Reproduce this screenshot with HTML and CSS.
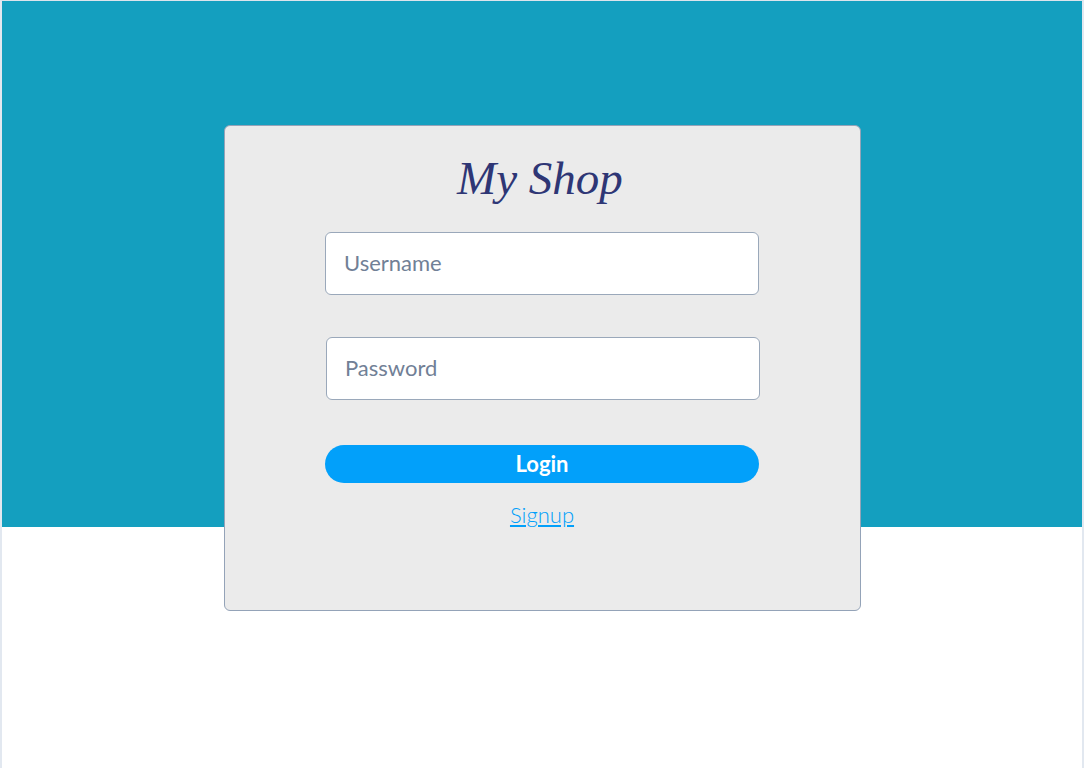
FILE: index.html
```html
<!DOCTYPE html>
<html>
<head>
<meta charset="utf-8">
<link rel="stylesheet" href="styles.css">
</head>
<body>
<div class="page">
  <div class="hero"></div>
  <div class="card-wrap">
    <form class="card">
      <h1 class="title">My Shop</h1>
      <input class="field" type="text" placeholder="Username">
      <input class="field field-pass" type="password" placeholder="Password">
      <button class="btn" type="button">Login</button>
      <a class="signup" href="#">Signup</a>
    </form>
  </div>
</div>
</body>
</html>
```
FILE: styles.css
```css
html, body {
  margin: 0;
  padding: 0;
  background: #ffffff;
}
.page {
  width: 1080px;
  height: 767px;
  border-top: 1px solid #dde4ec;
  border-left: 2px solid #e2e8f0;
  border-right: 2px solid #e2e8f0;
  font-family: Lato, "Liberation Sans", sans-serif;
  overflow: hidden;
}
.hero {
  height: 526px;
  background: #149fbf;
}
.card-wrap {
  display: flex;
  justify-content: center;
  margin-top: -402px;
}
.card {
  box-sizing: border-box;
  width: 637px;
  height: 486px;
  background: #ebebeb;
  border: 1px solid #94a3b8;
  border-radius: 6px;
  display: flex;
  flex-direction: column;
  align-items: center;
  padding-top: 21px;
}
.title {
  margin: 0;
  font-family: "Liberation Serif", "Times New Roman", serif;
  font-style: italic;
  font-weight: normal;
  font-size: 47px;
  line-height: 62px;
  color: #2e3675;
  height: 62px;
  margin-bottom: 23px;
  margin-right: 4px;
}
.field {
  box-sizing: border-box;
  width: 434px;
  height: 63px;
  background: #ffffff;
  border: 1px solid #9aa8ba;
  border-radius: 6px;
  padding: 0 18px 2px;
  font-family: Lato, "Liberation Sans", sans-serif;
  font-size: 22px;
  color: #4a5568;
  outline: none;
}
.field::placeholder {
  color: #718096;
}
.field-pass {
  margin-top: 42px;
  margin-left: 2px;
}
.btn {
  margin-top: 45px;
  width: 434px;
  height: 38px;
  border: none;
  border-radius: 19px;
  background: #02a0fa;
  color: #ffffff;
  font-family: Lato, "Liberation Sans", sans-serif;
  font-weight: bold;
  font-size: 22px;
  padding: 0 0 2px;
}
.signup {
  margin-top: 17px;
  font-size: 22px;
  font-weight: 300;
  color: #02a0fa;
  text-decoration: underline;
  line-height: 30px;
}
```
